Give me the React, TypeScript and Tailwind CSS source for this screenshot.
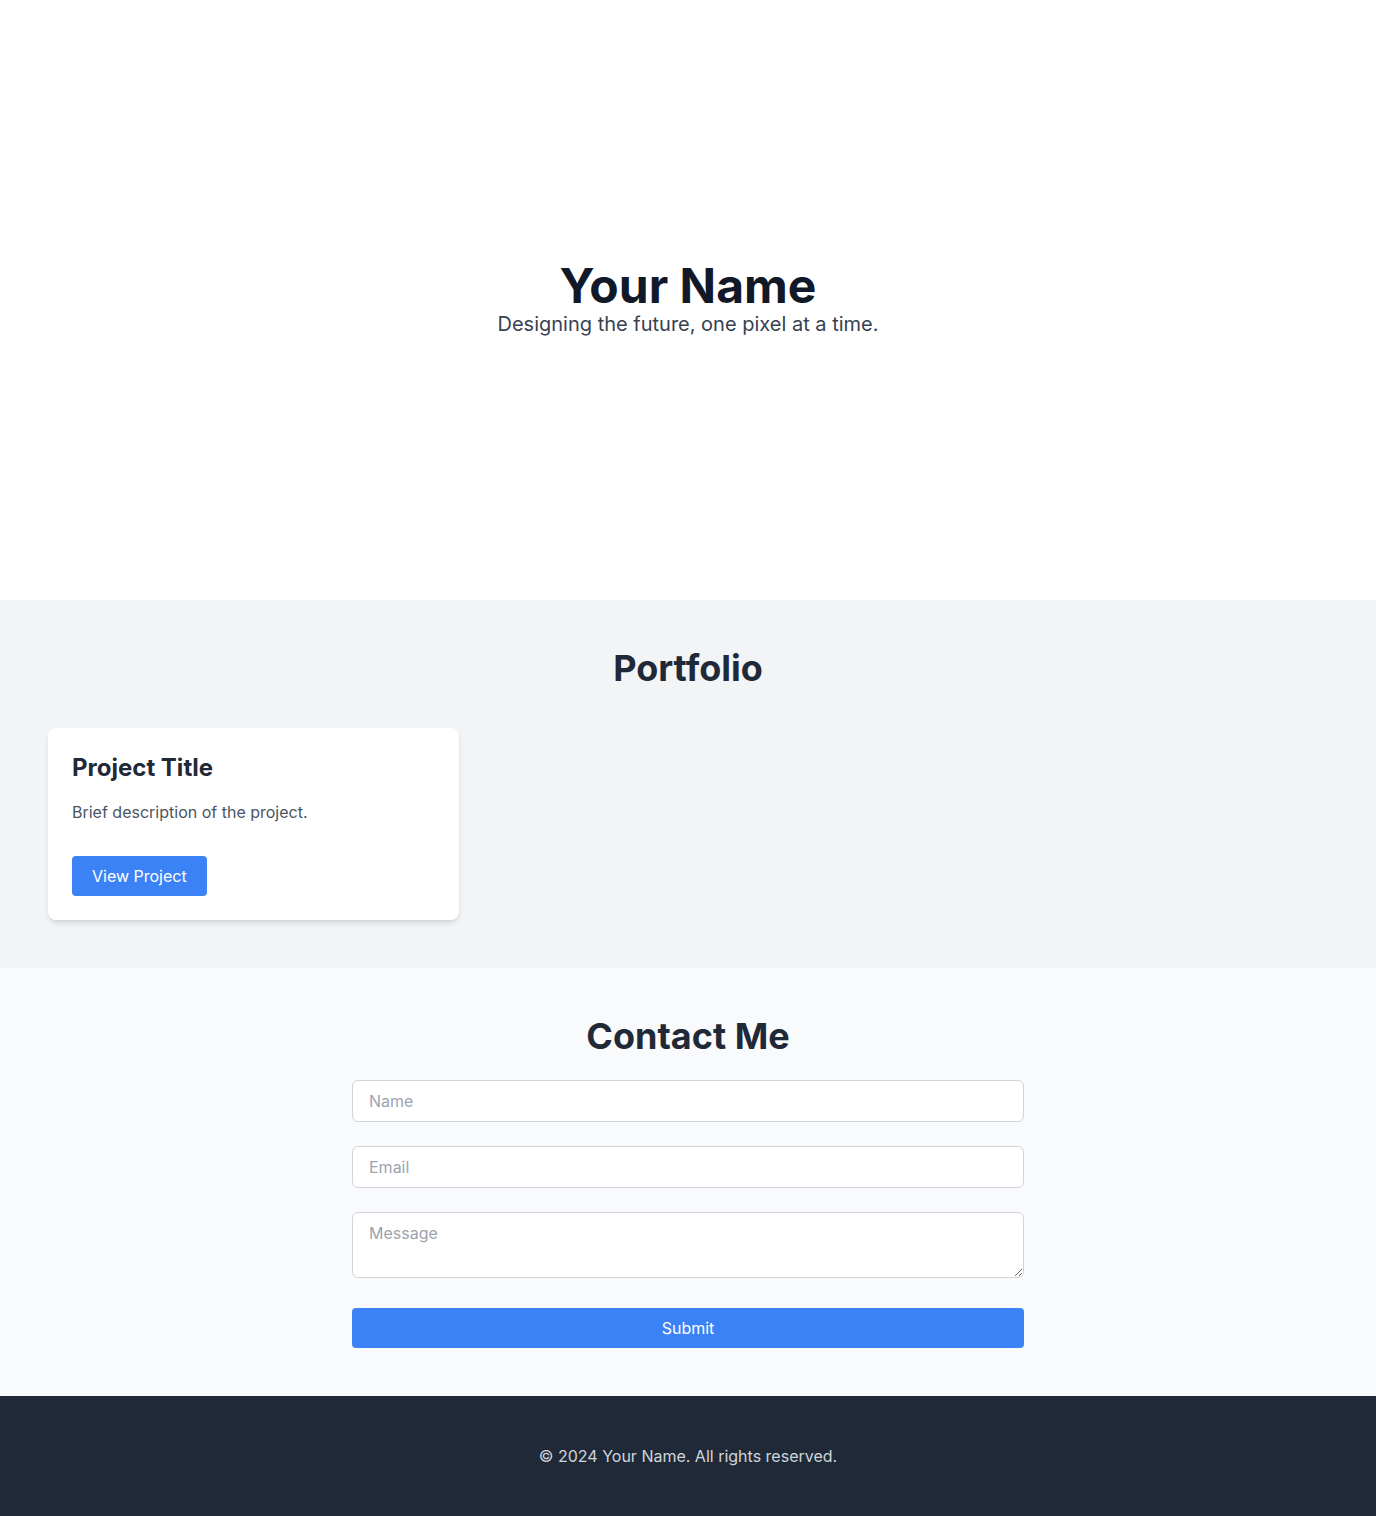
import React from 'react';

const projects = [
  { title: 'Project Title', description: 'Brief description of the project.' },
];

export default function App() {
  return (
    <div className="font-['Inter',sans-serif] text-[#111827]">
      {/* Hero */}
      <header className="h-[600px] bg-white flex flex-col items-center justify-center text-center">
        <h1 className="text-5xl font-bold text-[#111827]">Your Name</h1>
        <p className="text-xl text-[#374151]">Designing the future, one pixel at a time.</p>
      </header>

      {/* Portfolio */}
      <section className="py-12 bg-[#f3f4f6]">
        <div className="container mx-auto">
          <h2 className="text-4xl font-bold text-center text-[#1f2937] mb-10">Portfolio</h2>
          <div className="grid grid-cols-3 gap-6">
            {projects.map((p, i) => (
              <div key={i} className="bg-white rounded-lg shadow-md p-6">
                <h3 className="text-2xl font-bold text-[#1f2937]">{p.title}</h3>
                <p className="mt-4 text-[#4b5563]">{p.description}</p>
                <button className="mt-8 px-5 py-2 bg-[#3b82f6] text-white rounded">View Project</button>
              </div>
            ))}
          </div>
        </div>
      </section>

      {/* Contact */}
      <section className="py-12 bg-[#f9fafb]">
        <h2 className="text-4xl font-bold text-center text-[#1f2937] mb-6">Contact Me</h2>
        <form className="max-w-2xl mx-auto" onSubmit={(e) => e.preventDefault()}>
          <input
            type="text"
            placeholder="Name"
            className="block w-full mb-6 px-4 py-2 bg-white border border-[#d1d5db] rounded-md placeholder:text-[#9ca3af]"
          />
          <input
            type="email"
            placeholder="Email"
            className="block w-full mb-6 px-4 py-2 bg-white border border-[#d1d5db] rounded-md placeholder:text-[#9ca3af]"
          />
          <textarea
            rows={2}
            placeholder="Message"
            className="block w-full mb-[30px] px-4 py-2 bg-white border border-[#d1d5db] rounded-md placeholder:text-[#9ca3af]"
          />
          <button type="submit" className="w-full py-2 bg-[#3b82f6] text-white rounded">
            Submit
          </button>
        </form>
      </section>

      {/* Footer */}
      <footer className="py-12 bg-[#1f2937] text-center">
        <p className="text-[#d1d5db]">© 2024 Your Name. All rights reserved.</p>
      </footer>
    </div>
  );
}
